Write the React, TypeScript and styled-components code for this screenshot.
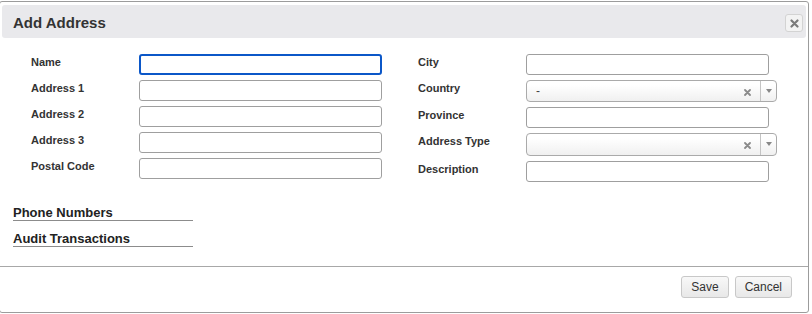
import React from 'react'
import styled, { createGlobalStyle } from 'styled-components'

const Global = createGlobalStyle`
   html, body {
      margin: 0;
      padding: 0;
      background: #fff;
      font-family: "Liberation Sans", Arial, Helvetica, sans-serif;
      color: #333;
   }
`

const leftFields = ['Name', 'Address 1', 'Address 2', 'Address 3', 'Postal Code']
const rightFields: { label: string; select?: boolean; value?: string }[] = [
   { label: 'City' },
   { label: 'Country', select: true, value: '-' },
   { label: 'Province' },
   { label: 'Address Type', select: true, value: '' },
   { label: 'Description' },
]

const CloseIcon = () => (
   <svg width="9" height="9" viewBox="0 0 9 9">
      <path d="M1.5 1.5 L7.5 7.5 M7.5 1.5 L1.5 7.5" stroke="#7a7a7a" strokeWidth="2.2" strokeLinecap="round" />
   </svg>
)

const ClearIcon = () => (
   <svg width="7" height="7" viewBox="0 0 7 7">
      <path d="M1 1 L6 6 M6 1 L1 6" stroke="#8a8a8a" strokeWidth="1.8" strokeLinecap="round" />
   </svg>
)

const App = () => {
   return (
      <>
         <Global />
         <Dialog>
            <TitleBar>
               <Title>Add Address</Title>
               <CloseButton aria-label="Close">
                  <CloseIcon />
               </CloseButton>
            </TitleBar>
            <Content>
               <Form>
                  <Column>
                     {leftFields.map((label, i) => (
                        <Row key={label}>
                           <Label>{label}</Label>
                           <Input focused={i === 0} />
                        </Row>
                     ))}
                  </Column>
                  <Column>
                     {rightFields.map((f) => (
                        <Row key={f.label}>
                           <Label>{f.label}</Label>
                           {f.select ? (
                              <Select>
                                 <SelectValue>{f.value}</SelectValue>
                                 <SelectClear>
                                    <ClearIcon />
                                 </SelectClear>
                                 <SelectArrow>
                                    <Triangle />
                                 </SelectArrow>
                              </Select>
                           ) : (
                              <Input />
                           )}
                        </Row>
                     ))}
                  </Column>
               </Form>
               <Sections>
                  <SectionHeader>Phone Numbers</SectionHeader>
                  <SectionHeader>Audit Transactions</SectionHeader>
               </Sections>
            </Content>
            <ButtonPane>
               <Button>Save</Button>
               <Button>Cancel</Button>
            </ButtonPane>
         </Dialog>
      </>
   )
}

const Dialog = styled('div')`
   box-sizing: border-box;
   width: 810px;
   height: 312px;
   margin: 1px 0 0 -1px;
   padding: 3px 2px 2px 2px;
   border: 1px solid #9c9c9c;
   border-radius: 3px;
   display: flex;
   flex-direction: column;
   background: #fff;
`
const TitleBar = styled('div')`
   height: 33px;
   display: flex;
   align-items: center;
   justify-content: space-between;
   padding: 0 3px 0 11px;
   background: #e9e9ec;
   border-radius: 3px;
   box-sizing: border-box;
`
const Title = styled('span')`
   font-size: 15px;
   font-weight: bold;
   color: #333;
   padding-top: 1px;
`
const CloseButton = styled('button')`
   width: 18px;
   height: 18px;
   padding: 0;
   margin-top: 3px;
   display: flex;
   align-items: center;
   justify-content: center;
   background: #f3f3f3;
   border: 1px solid #d3d3d3;
   border-radius: 3px;
`
const Content = styled('div')`
   flex: 1;
   display: flex;
   flex-direction: column;
`
const Form = styled('div')`
   display: flex;
   gap: 36px;
   padding: 16px 0 0 29px;
`
const Column = styled('div')`
   display: flex;
   flex-direction: column;
   gap: 4.9px;
`
const Row = styled('div')`
   display: flex;
   align-items: flex-start;
`
const Label = styled('label')`
   width: 108px;
   flex-shrink: 0;
   font-size: 11px;
   font-weight: bold;
   line-height: 13px;
   padding-top: 2px;
   color: #333;
`
const Input = styled('input')<{ focused?: boolean }>`
   box-sizing: border-box;
   width: 243px;
   height: 21px;
   margin: 0;
   padding: 0 6px;
   font-family: inherit;
   font-size: 12px;
   background: #fff;
   border-radius: 3px;
   border: ${(p) => (p.focused ? '2px solid #0b57c8' : '1px solid #9f9f9f')};
   outline: none;
`
const Select = styled('div')`
   box-sizing: border-box;
   width: 251px;
   height: 22.5px;
   display: flex;
   align-items: center;
   border: 1px solid #aaa;
   border-radius: 4px;
   background: linear-gradient(#ffffff 20%, #f0f0f0 100%);
`
const SelectValue = styled('span')`
   flex: 1;
   padding-left: 9px;
   font-size: 12px;
   color: #444;
`
const SelectClear = styled('span')`
   display: flex;
   align-items: center;
   padding: 3px 9px 0 0;
`
const SelectArrow = styled('span')`
   width: 15px;
   align-self: stretch;
   display: flex;
   align-items: center;
   justify-content: center;
   border-left: 1px solid #c4c4c4;
`
const Triangle = styled('span')`
   width: 0;
   height: 0;
   border-left: 3px solid transparent;
   border-right: 3px solid transparent;
   border-top: 4px solid #888;
`
const Sections = styled('div')`
   display: flex;
   flex-direction: column;
   gap: 10px;
   margin-top: 23px;
   padding-left: 11px;
`
const SectionHeader = styled('div')`
   width: 180px;
   font-size: 13px;
   font-weight: bold;
   line-height: 15px;
   color: #222;
   border-bottom: 1px solid #8c8c8c;
`
const ButtonPane = styled('div')`
   display: flex;
   justify-content: flex-end;
   gap: 6px;
   margin: 0 -2px;
   padding: 9px 16px 12px 0;
   border-top: 1px solid #a8a8a8;
`
const Button = styled('button')`
   height: 22px;
   padding: 0 9px;
   font-family: inherit;
   font-size: 12px;
   color: #333;
   background: linear-gradient(#f8f8f8, #e8e8e8);
   border: 1px solid #c8c8c8;
   border-radius: 3px;
`

export default App
